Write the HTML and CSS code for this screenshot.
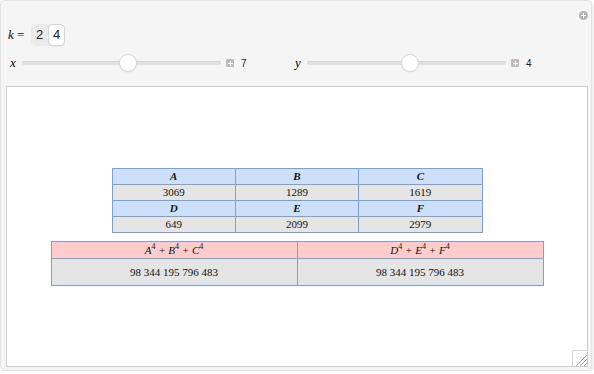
FILE: index.html
```html
<!DOCTYPE html>
<html lang="en">
<head>
  <meta charset="UTF-8" />
  <title>Sums of fourth powers</title>
  <link rel="stylesheet" href="styles.css">
</head>
<body>
  <div class="panel">
    <span class="corner-btn"></span>
    <div class="controls">
      <div class="setter-row">
        <span class="var"><i>k</i> =</span>
        <div class="setter">
          <span class="opt">2</span>
          <span class="opt selected">4</span>
        </div>
      </div>
      <div class="slider-row">
        <div class="slider">
          <span class="slabel"><i>x</i></span>
          <div class="track"><span class="thumb" style="left:53.3%"></span></div>
          <span class="plus"></span>
          <span class="value">7</span>
        </div>
        <div class="slider">
          <span class="slabel"><i>y</i></span>
          <div class="track"><span class="thumb" style="left:52%"></span></div>
          <span class="plus"></span>
          <span class="value">4</span>
        </div>
      </div>
    </div>

    <div class="pane">
      <table class="grid small">
        <tr class="head"><th>A</th><th>B</th><th>C</th></tr>
        <tr class="data"><td>3069</td><td>1289</td><td>1619</td></tr>
        <tr class="head"><th>D</th><th>E</th><th>F</th></tr>
        <tr class="data"><td>649</td><td>2099</td><td>2979</td></tr>
      </table>

      <table class="grid wide">
        <tr class="pink">
          <th><i>A</i><sup>4</sup> + <i>B</i><sup>4</sup> + <i>C</i><sup>4</sup></th>
          <th><i>D</i><sup>4</sup> + <i>E</i><sup>4</sup> + <i>F</i><sup>4</sup></th>
        </tr>
        <tr class="data tall">
          <td>98&nbsp;344&nbsp;195&nbsp;796&nbsp;483</td>
          <td>98&nbsp;344&nbsp;195&nbsp;796&nbsp;483</td>
        </tr>
      </table>
      <svg class="grip" width="15" height="16" viewBox="0 0 15 16">
        <path d="M0.5 16V0.5H15" fill="none" stroke="#d6d6d6" />
        <path d="M15 5L4 16M15 9L8 16M15 13L12 16" stroke="#9a9a9a" stroke-width="1" />
      </svg>
    </div>
  </div>
</body>
</html>
```

FILE: styles.css
```css
body {
  margin: 0;
  background: #fff;
  font-family: 'Liberation Serif', serif;
}

.panel {
  position: relative;
  width: 592px;
  height: 371px;
  box-sizing: border-box;
  border: 1px solid #e2e2e2;
  border-radius: 5px;
  background: #f5f5f5;
  box-shadow: 1px 1px 3px rgba(0, 0, 0, 0.1);
  padding: 0 3px 3px 5px;
  display: flex;
  flex-direction: column;
}

.corner-btn {
  position: absolute;
  top: 10px;
  right: 3px;
  width: 9px;
  height: 9px;
  border-radius: 50%;
  background: #b5b5b5;
}

.corner-btn::before,
.corner-btn::after {
  content: "";
  position: absolute;
  background: #fff;
}

.corner-btn::before { left: 2px; top: 4px; width: 5px; height: 1px; }
.corner-btn::after { left: 4px; top: 2px; width: 1px; height: 5px; }

.controls {
  height: 85px;
  padding-top: 23px;
  box-sizing: border-box;
}

.setter-row {
  display: flex;
  align-items: center;
  height: 22px;
  padding-left: 2px;
}

.var {
  font-size: 13px;
  color: #111;
  width: 23px;
}

.setter {
  display: flex;
  background: #ebebeb;
  border-radius: 5px;
  height: 22px;
}

.opt {
  font-family: 'Liberation Sans', sans-serif;
  font-size: 13px;
  color: #222;
  width: 17px;
  line-height: 22px;
  text-align: center;
}

.opt.selected {
  background: #fff;
  border: 1px solid #d4d4d4;
  border-radius: 5px;
  line-height: 20px;
  width: 15px;
  box-shadow: 0 1px 1px rgba(0, 0, 0, 0.06);
}

.slider-row {
  display: flex;
  height: 16px;
  margin-top: 9px;
  padding-left: 2px;
}

.slider {
  width: 285px;
  display: flex;
  align-items: center;
}

.slabel {
  font-size: 13px;
  width: 14px;
  padding-left: 2px;
  box-sizing: border-box;
}

.track {
  position: relative;
  width: 199px;
  height: 4px;
  border-radius: 2px;
  background: #e0e0e0;
  box-shadow: inset 0 1px 0 #d4d4d4;
}

.thumb {
  position: absolute;
  top: -6px;
  width: 16px;
  height: 16px;
  margin-left: -8px;
  border-radius: 50%;
  background: #fff;
  box-shadow: 0 0 0 1px #d8d8d8, 0 1px 2px rgba(0, 0, 0, 0.12);
}

.plus {
  position: relative;
  width: 8px;
  height: 8px;
  margin-left: 5px;
  background: #bcbcbc;
  border-radius: 1px;
}

.plus::before,
.plus::after {
  content: "";
  position: absolute;
  background: #fff;
}

.plus::before { left: 2px; top: 4px; width: 5px; height: 1px; }
.plus::after { left: 4px; top: 2px; width: 1px; height: 5px; }

.value {
  font-family: 'Liberation Sans', sans-serif;
  font-size: 10px;
  color: #222;
  margin-left: 7px;
}

.pane {
  position: relative;
  flex: 1;
  background: #fff;
  border: 1px solid #cfcfcf;
  display: flex;
  flex-direction: column;
  align-items: center;
  justify-content: center;
  gap: 8px;
}

.grid {
  border-collapse: collapse;
  font-size: 11px;
  color: #111;
  table-layout: fixed;
}

.grid th,
.grid td {
  border: 1px solid #7c9fd6;
  text-align: center;
  padding: 0;
}

.small { width: 371px; }
.wide { width: 493px; }

.grid th { font-style: italic; }
.small th { font-weight: bold; }
.wide th { font-weight: normal; }

.head th { background: #cce0fc; height: 15px; }
.data td { background: #e5e5e5; height: 15px; }
.pink th { background: #ffcccc; height: 16px; }
.data.tall td { height: 26px; }

sup {
  font-size: 8px;
  font-style: normal;
  vertical-align: 5px;
  line-height: 0;
}

.grip {
  position: absolute;
  right: 0;
  bottom: 0;
}
```
